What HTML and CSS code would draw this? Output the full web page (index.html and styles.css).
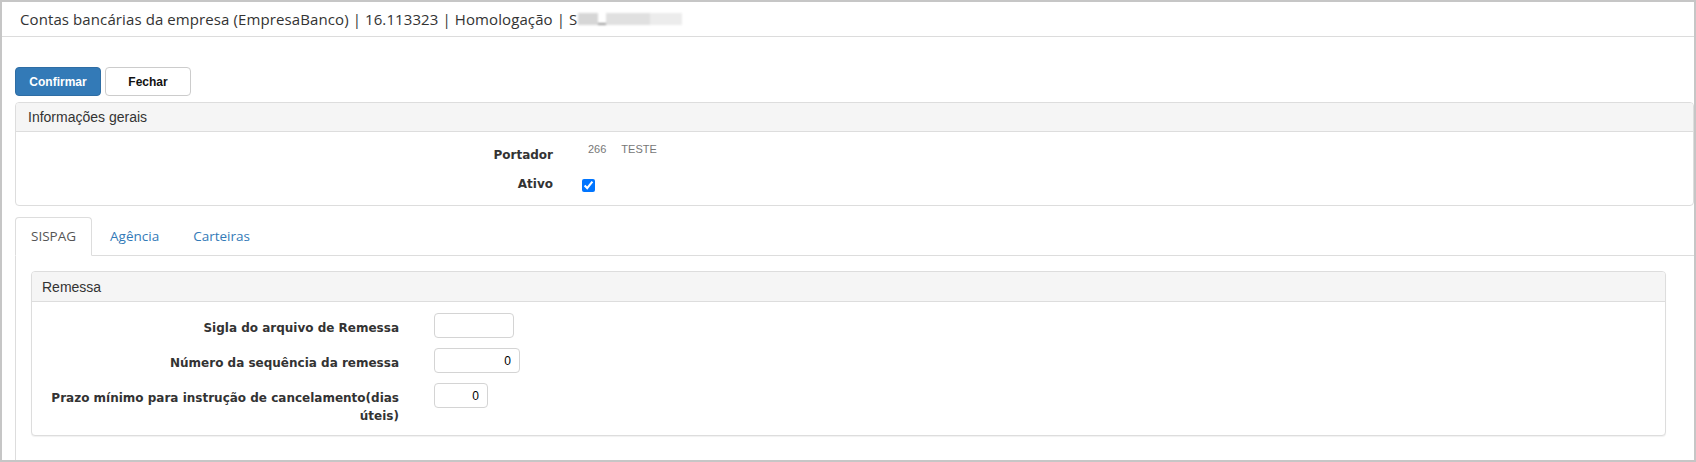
FILE: index.html
```html
<!DOCTYPE html>
<html lang="pt-BR">
<head>
<meta charset="utf-8">
<title>Contas bancárias da empresa</title>
<link rel="stylesheet" href="styles.css">
</head>
<body>
<div class="frame">
  <header class="title-bar">
    <span class="title-text">Contas bancárias da empresa (EmpresaBanco) | 16.113323 | Homologação | S</span><span class="redacted" aria-hidden="true"><i class="r1"></i><i class="r2"></i><i class="r3"></i><i class="r4"></i></span>
  </header>
  <main class="content">
    <div class="toolbar">
      <button class="btn btn-primary" type="button">Confirmar</button>
      <button class="btn btn-default" type="button">Fechar</button>
    </div>

    <section class="panel panel-info">
      <div class="panel-heading">Informações gerais</div>
      <div class="panel-body info-body">
        <div class="info-row">
          <label class="info-label">Portador</label>
          <div class="info-value"><span>266</span><span>TESTE</span></div>
        </div>
        <div class="info-row">
          <label class="info-label" for="ativo">Ativo</label>
          <div class="info-check"><input id="ativo" type="checkbox" checked></div>
        </div>
      </div>
    </section>

    <nav class="tabs">
      <a class="tab active">SISPAG</a>
      <a class="tab">Agência</a>
      <a class="tab">Carteiras</a>
    </nav>

    <div class="tab-content">
      <section class="panel panel-remessa">
        <div class="panel-heading">Remessa</div>
        <div class="panel-body form-body">
          <div class="form-row">
            <label class="form-label">Sigla do arquivo de Remessa</label>
            <input class="field w-sigla" type="text" value="">
          </div>
          <div class="form-row">
            <label class="form-label">Número da sequência da remessa</label>
            <input class="field w-seq" type="text" value="0">
          </div>
          <div class="form-row">
            <label class="form-label">Prazo mínimo para instrução de cancelamento(dias úteis)</label>
            <input class="field w-prazo" type="text" value="0">
          </div>
        </div>
      </section>
    </div>
  </main>
</div>
</body>
</html>
```

FILE: styles.css
```css
* { box-sizing: border-box; }

html, body {
  margin: 0;
  padding: 0;
  background: #fff;
}

.frame {
  width: 1696px;
  height: 462px;
  border: 2px solid #c6c6c6;
  background: #fff;
  overflow: hidden;
  display: flex;
  flex-direction: column;
}

.title-bar {
  height: 35px;
  flex: none;
  border-bottom: 1px solid #dcdcdc;
  padding: 0 0 0 18px;
  display: flex;
  align-items: center;
  font-family: "Open Sans", "Liberation Sans", sans-serif;
  font-size: 15px;
  letter-spacing: 0.1px;
  color: #333;
  white-space: nowrap;
}

.redacted {
  display: inline-flex;
  align-items: center;
  height: 14px;
  margin-left: 1px;
  filter: blur(1.3px);
}
.redacted i { display: block; height: 12px; }
.redacted .r1 { width: 20px; background: #d6d6d6; }
.redacted .r2 { width: 8px; height: 2px; margin-top: 10px; background: #999; }
.redacted .r3 { width: 44px; background: #e0e0e0; }
.redacted .r4 { width: 32px; background: #ececec; }

.content {
  flex: 1;
  padding: 30px 0 0 13px;
  display: flex;
  flex-direction: column;
}

.toolbar {
  display: flex;
  gap: 4px;
  margin-bottom: 6px;
}

.btn {
  width: 86px;
  height: 29px;
  border-radius: 4px;
  font-family: "Liberation Sans", Arial, sans-serif;
  font-weight: bold;
  font-size: 12px;
  padding: 0;
  cursor: pointer;
}
.btn-primary {
  background: #337ab7;
  border: 1px solid #2e6da4;
  color: #fff;
}
.btn-default {
  background: #fff;
  border: 1px solid #ccc;
  color: #111;
}

.panel {
  border: 1px solid #ddd;
  border-radius: 4px;
  background: #fff;
}
.panel-heading {
  background: #f5f5f5;
  border-bottom: 1px solid #ddd;
  border-radius: 3px 3px 0 0;
  font-family: "Liberation Sans", Arial, sans-serif;
  font-size: 14px;
  color: #333;
  display: flex;
  align-items: center;
}

.panel-info .panel-heading {
  height: 29px;
  padding-left: 12px;
}

.info-body {
  padding: 10px 0;
  display: flex;
  flex-direction: column;
  gap: 5px;
}
.info-row {
  display: grid;
  grid-template-columns: 537px 1fr;
  column-gap: 29px;
  height: 24px;
}
.info-label {
  text-align: right;
  padding-top: 4px;
  line-height: 18px;
  font-family: "DejaVu Sans", Verdana, sans-serif;
  font-weight: bold;
  font-size: 12px;
  color: #333;
}
.info-value {
  display: flex;
  gap: 15px;
  padding-left: 6px;
  line-height: 14px;
  font-family: "Liberation Sans", Arial, sans-serif;
  font-size: 11px;
  color: #777;
}
.info-check input {
  width: 13px;
  height: 13px;
  margin: 8px 0 0 0;
}

.tabs {
  margin-top: 11px;
  display: flex;
  border-bottom: 1px solid #ddd;
  height: 39px;
}
.tab {
  display: block;
  height: 39px;
  margin-right: 2px;
  padding: 0 15px;
  border: 1px solid transparent;
  border-radius: 4px 4px 0 0;
  font-family: "Open Sans", "Liberation Sans", sans-serif;
  font-size: 13.5px;
  line-height: 36px;
  color: #337ab7;
  text-decoration: none;
}
.tab.active {
  color: #555;
  background: #fff;
  border-color: #ddd #ddd transparent #ddd;
}

.tab-content {
  flex: 1;
  border-left: 1px solid #ddd;
  padding: 15px 28px 0 15px;
}

.panel-remessa {
  box-shadow: 0 1px 1px rgba(0, 0, 0, 0.06);
}
.panel-remessa .panel-heading {
  height: 30px;
  padding-left: 10px;
}

.form-body {
  padding: 11px 0 10px 8px;
  display: flex;
  flex-direction: column;
  gap: 10px;
}
.form-row {
  display: grid;
  grid-template-columns: 359px auto;
  column-gap: 35px;
  justify-content: start;
  align-items: start;
}
.form-label {
  text-align: right;
  padding-top: 6px;
  line-height: 18px;
  font-family: "DejaVu Sans", Verdana, sans-serif;
  font-weight: bold;
  font-size: 12px;
  color: #333;
}
.field {
  height: 25px;
  border: 1px solid #d4d4d4;
  border-radius: 4px;
  padding: 0 8px;
  text-align: right;
  font-family: "Liberation Sans", Arial, sans-serif;
  font-size: 12px;
  color: #000;
  background: #fff;
  outline: none;
}
.w-sigla { width: 80px; }
.w-seq { width: 86px; }
.w-prazo { width: 54px; }
```
